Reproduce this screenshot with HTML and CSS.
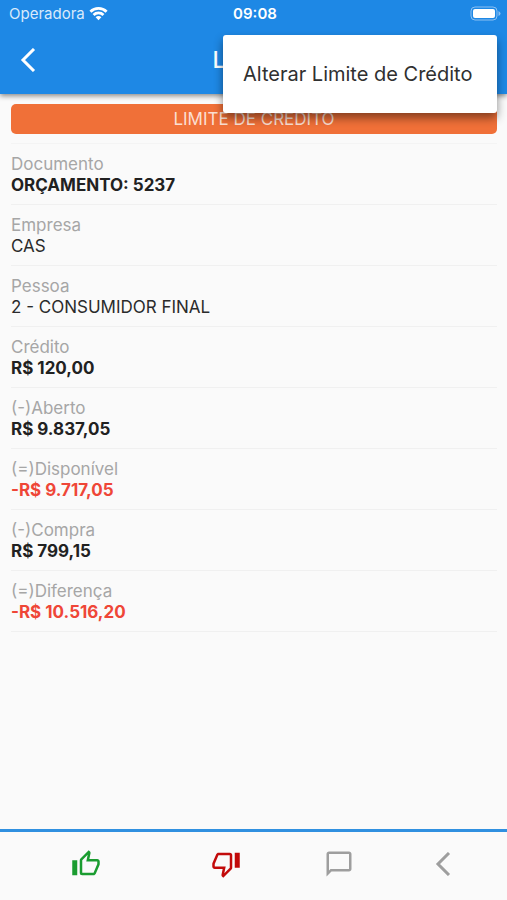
FILE: index.html
```html
<!DOCTYPE html>
<html lang="pt-BR">
<head>
<meta charset="utf-8">
<meta name="viewport" content="width=device-width, initial-scale=1">
<title>Limite de Crédito</title>
<link rel="stylesheet" href="styles.css">
</head>
<body>
<header class="top">
  <div class="status">
    <span class="carrier">Operadora
      <svg width="19" height="15" viewBox="0 0 20 15" fill="none" stroke="#fff" stroke-width="3"><path d="M1.500 5.600a12 12 0 0 1 17 0M4.800 9a7.400 7.400 0 0 1 10.400 0"/><path d="M10 14.500 7 11.500a4.200 4.200 0 0 1 6 0Z" fill="#fff" stroke="none"/></svg>
    </span>
    <time class="clock">09:08</time>
    <svg class="battery" width="31" height="15" viewBox="0 0 31 15"><rect x="1" y="1" width="26" height="13" rx="4" fill="none" stroke="#8cc0f2"/><rect x="3" y="3" width="22" height="9" rx="2" fill="#fff"/><path d="M28.500 5v5q2-1 2-2.500t-2-2.500Z" fill="#8cc0f2"/></svg>
  </div>
  <div class="bar">
    <button class="icon-button back" type="button" aria-label="Voltar"><svg width="16" height="24" viewBox="0 0 16 24" fill="none" stroke="#fff" stroke-width="3"><path d="M14 1 3 12l11 11"/></svg></button>
    <h1 class="title">L</h1>
  </div>
  <div class="menu" role="menu">
    <button class="menu-item" type="button" role="menuitem">Alterar Limite de Crédito</button>
  </div>
</header>
<main class="content">
  <h2 class="banner">LIMITE DE CRÉDITO</h2>
  <dl class="list">
    <div class="row"><dt>Documento</dt><dd class="strong">ORÇAMENTO: 5237</dd></div>
    <div class="row"><dt>Empresa</dt><dd>CAS</dd></div>
    <div class="row"><dt>Pessoa</dt><dd>2 - CONSUMIDOR FINAL</dd></div>
    <div class="row"><dt>Crédito</dt><dd class="strong">R$ 120,00</dd></div>
    <div class="row"><dt>(-)Aberto</dt><dd class="strong">R$ 9.837,05</dd></div>
    <div class="row"><dt>(=)Disponível</dt><dd class="strong negative">-R$ 9.717,05</dd></div>
    <div class="row"><dt>(-)Compra</dt><dd class="strong">R$ 799,15</dd></div>
    <div class="row"><dt>(=)Diferença</dt><dd class="strong negative">-R$ 10.516,20</dd></div>
  </dl>
</main>
<footer class="actions">
  <button class="icon-button approve" type="button" aria-label="Aprovar"><svg width="30" height="30" viewBox="0 0 24 24" fill="currentColor"><path d="M5,9V21H1V9H5M9,21A2,2 0 0,1 7,19V9C7,8.45 7.22,7.95 7.59,7.59L14.17,1L15.23,2.06C15.5,2.33 15.67,2.7 15.67,3.11L15.64,3.43L14.69,8H21C22.11,8 23,8.9 23,10V12C23,12.26 22.95,12.5 22.86,12.73L19.84,19.78C19.54,20.5 18.83,21 18,21H9M9,19H18.03L21,12V10H12.21L13.34,4.68L9,9.03V19Z"/></svg></button>
  <button class="icon-button reject" type="button" aria-label="Reprovar"><svg width="30" height="30" viewBox="0 0 24 24" fill="currentColor"><path d="M19,15V3H23V15H19M15,3A2,2 0 0,1 17,5V15C17,15.55 16.78,16.05 16.41,16.41L9.83,23L8.77,21.94C8.5,21.67 8.33,21.3 8.33,20.88L8.36,20.57L9.31,16H3C1.89,16 1,15.1 1,14V12C1,11.74 1.05,11.5 1.14,11.27L4.16,4.22C4.46,3.5 5.17,3 6,3H15M15,5H5.97L3,12V14H11.78L10.65,19.32L15,14.97V5Z"/></svg></button>
  <button class="icon-button" type="button" aria-label="Comentar"><svg width="30" height="30" viewBox="0 0 24 24" fill="currentColor"><path d="M20 2H4c-1.100 0-2 .9-2 2v18l4-4h14c1.100 0 2-.9 2-2V4c0-1.100-.9-2-2-2Zm0 14H5.200L4 17.200V4h16v12Z"/></svg></button>
  <button class="icon-button" type="button" aria-label="Anterior"><svg width="16" height="24" viewBox="0 0 16 24" fill="none" stroke="currentColor" stroke-width="3"><path d="M14 1 3 12l11 11"/></svg></button>
</footer>
</body>
</html>
```
FILE: styles.css
```css
* { box-sizing: border-box; }

body {
  margin: 0;
  min-height: 100vh;
  display: flex;
  flex-direction: column;
  background: #fafafa;
  color: #2b2b2b;
  font-family: Inter, Roboto, sans-serif;
  font-size: 17px;
}

button {
  border: 0;
  padding: 0;
  background: none;
  font: inherit;
  color: inherit;
}

svg { display: block; }

.top {
  position: relative;
  background: #1e88e5;
  color: #fff;
  box-shadow: 0 2px 5px rgba(0, 0, 0, .45);
}

.status {
  display: grid;
  grid-template-columns: 1fr auto 1fr;
  align-items: center;
  height: 26px;
  padding: 0 6px 0 9px;
  font-size: 15px;
}

.carrier {
  display: flex;
  align-items: center;
  gap: 4px;
  color: #d9eafb;
}

.clock { font-weight: 600; }

.battery { justify-self: end; }

.bar {
  display: grid;
  grid-template-columns: 1fr 82px 1fr;
  align-items: center;
  height: 68px;
}

.icon-button {
  display: grid;
  place-items: center;
}

.back { width: 56px; height: 56px; }

.title {
  margin: 0;
  font-size: 23px;
  font-weight: 500;
}

.menu {
  position: absolute;
  top: 35px;
  right: 10px;
  width: 274px;
  padding: 15px 0;
  border-radius: 3px;
  background: #fff;
  color: #303030;
  box-shadow: 0 5px 10px rgba(0, 0, 0, .45);
}

.menu-item {
  display: block;
  width: 100%;
  height: 48px;
  padding: 0 20px;
  text-align: left;
  font-size: 20px;
}

.content {
  flex: 1;
  padding: 10px 10px 0 11px;
}

.banner {
  margin: 0;
  border-radius: 5px;
  background: #f07038;
  color: #fbdfd2;
  text-align: center;
  font-size: 17px;
  font-weight: 400;
  line-height: 30px;
}

.list {
  margin: 9px 0 0;
  border-top: 1px solid #f4f4f4;
}

.row {
  padding: 10px 0 8px;
  border-bottom: 1px solid #f0f0f0;
}

.row dt {
  color: #a6a6a6;
  line-height: 20px;
}

.row dd {
  margin: 0;
  line-height: 22px;
}

.row .strong {
  color: #212121;
  font-weight: 700;
}

.row .negative { color: #ef4637; }

.actions {
  display: grid;
  grid-template-columns: 171fr 110fr 115fr 94fr;
  height: 71px;
  padding: 0 17px 4px 0;
  border-top: 3px solid #3090e0;
  color: #9e9e9e;
}

.approve { color: #1a9c30; }

.reject { color: #c20a0a; }
```
